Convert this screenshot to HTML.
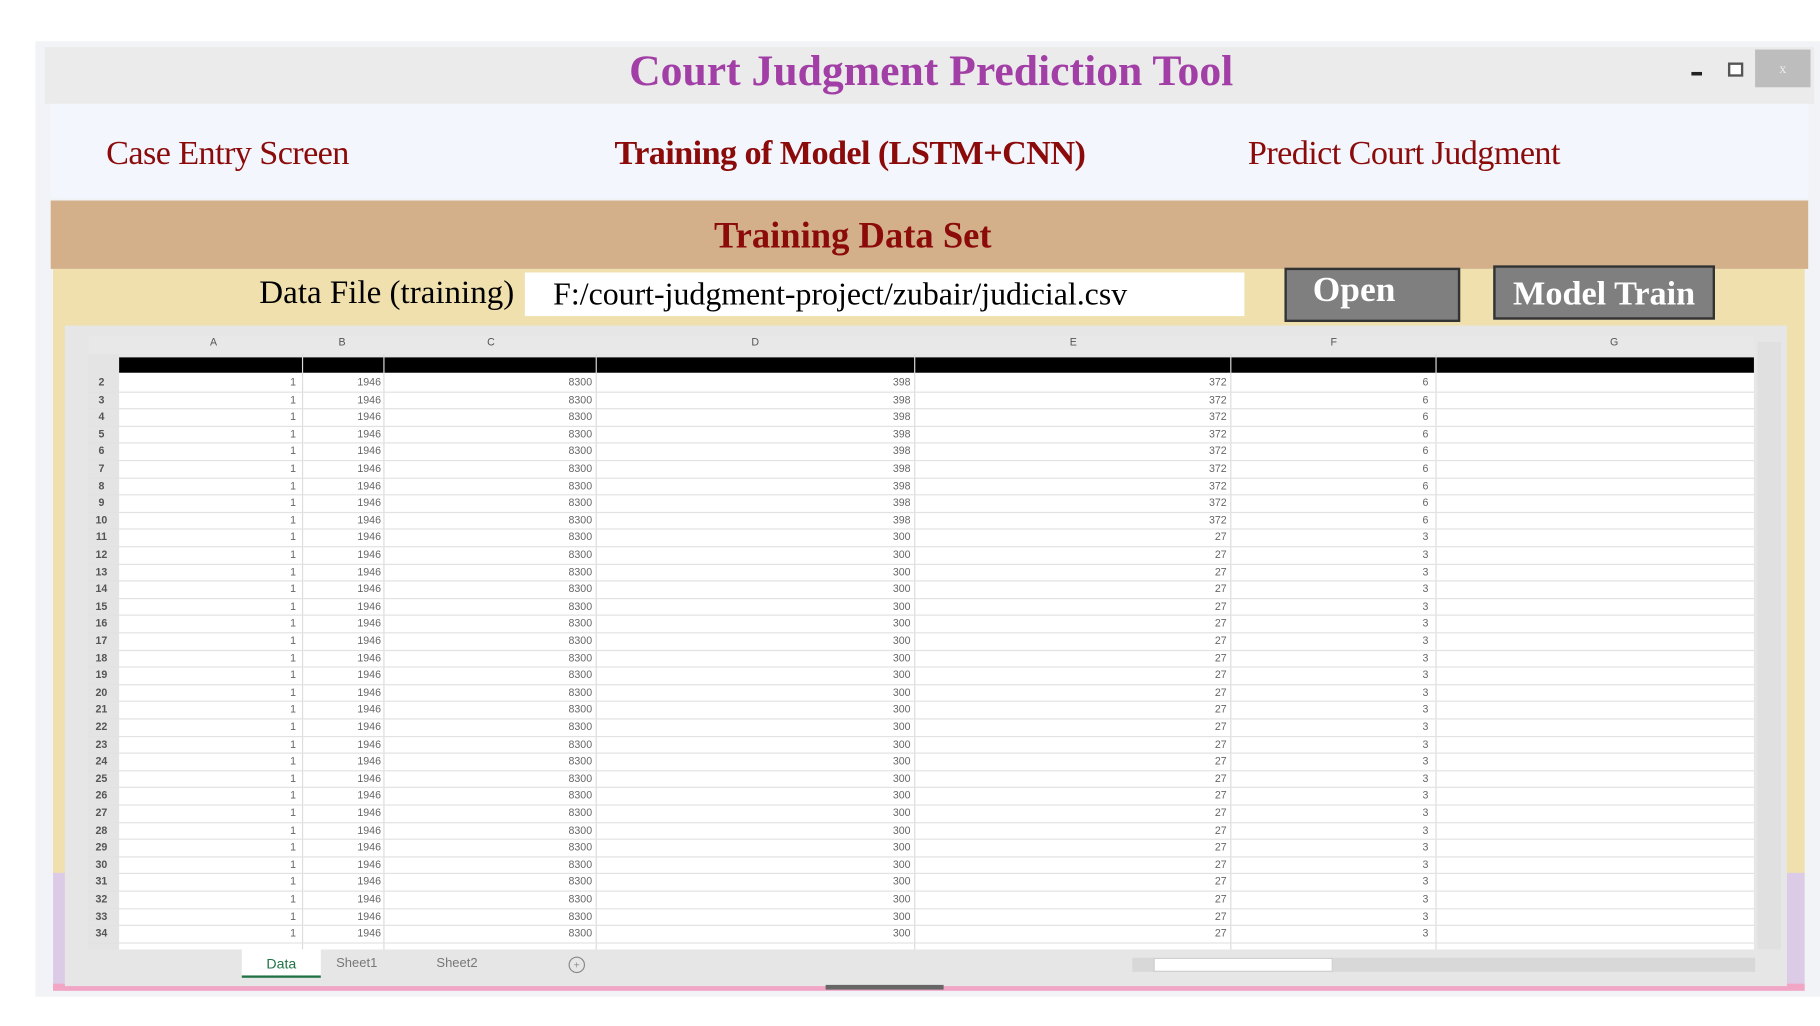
<!DOCTYPE html>
<html><head><meta charset="utf-8"><style>
html,body{margin:0;padding:0;background:#fff;width:1820px;height:1026px;overflow:hidden}
#s{position:absolute;left:0;top:0;width:1543px;height:870px;transform:scale(1.1795);transform-origin:0 0;font-family:"Liberation Serif",serif}
.a{position:absolute}
.nav{font-size:29px;color:#8b0a0a;top:114px;white-space:nowrap;letter-spacing:-0.5px}
.row{position:absolute;left:75px;width:1412px;height:14.6px;border-bottom:1px solid #e2e2e2;font-family:"Liberation Sans",sans-serif;font-size:9px;color:#666;line-height:14px}
.row span{position:absolute;text-align:right}
.rn{left:0;width:22px;text-align:center!important;color:#555;font-weight:bold}
.c1{left:26px;width:150px}.c2{left:181px;width:67px}.c3{left:250px;width:177px}.c4{left:430px;width:267px}.c5{left:700px;width:265px}.c6{left:968px;width:168px}
.vl{position:absolute;top:300px;height:505px;width:1px;background:#dcdcdc}
</style></head><body><div id="s">
<div class="a" style="left:30px;top:35px;width:1513px;height:810px;background:#f1f3f6"></div>
<div class="a" style="left:38px;top:40px;width:1500px;height:48px;background:#ebebeb"></div>
<div class="a" style="left:0;top:38px;width:1543px;text-align:center;font-size:37px;font-weight:bold;color:#a23fa6;padding-left:36px;box-sizing:border-box;line-height:46px">Court Judgment Prediction Tool</div>
<div class="a" style="left:1434px;top:61px;width:9px;height:3px;background:#222"></div>
<div class="a" style="left:1465px;top:53px;width:9px;height:8px;border:2px solid #555;background:#fff"></div>
<div class="a" style="left:1488px;top:42px;width:47px;height:32px;background:#bdbdbd;color:#eee;text-align:center;font-size:12px;line-height:32px">x</div>
<div class="a" style="left:43px;top:88px;width:1490px;height:80px;background:#f3f6fc"></div>
<div class="a nav" style="left:90px">Case Entry Screen</div>
<div class="a nav" style="left:521px;font-weight:bold">Training of Model (LSTM+CNN)</div>
<div class="a nav" style="left:1058px">Predict Court Judgment</div>
<div class="a" style="left:43px;top:170px;width:1490px;height:58px;background:#d3b08a"></div>
<div class="a" style="left:43px;top:182px;width:1360px;text-align:center;font-size:31px;font-weight:bold;color:#8b0a0a">Training Data Set</div>
<div class="a" style="left:45px;top:228px;width:1485px;height:515px;background:#efe0ae"></div>
<div class="a" style="left:45px;top:740px;width:1485px;height:100px;background:#dccbe6"></div>
<div class="a" style="left:45px;top:834px;width:1485px;height:6px;background:#f2a6c6"></div>
<div class="a" style="left:100px;top:233px;width:336px;text-align:right;font-size:28px;color:#000">Data File (training)</div>
<div class="a" style="left:445px;top:231px;width:610px;height:37px;background:#fff;font-size:27px;line-height:37px;padding-left:24px;box-sizing:border-box;white-space:nowrap">F:/court-judgment-project/zubair/judicial.csv</div>
<div class="a" style="left:1089px;top:227px;width:149px;height:46px;background:#7f7f7f;border:2px solid #333;box-sizing:border-box;color:#fff;font-weight:bold;font-size:30px;padding-left:22px;line-height:34px">Open</div>
<div class="a" style="left:1266px;top:225px;width:188px;height:46px;background:#7f7f7f;border:2px solid #333;box-sizing:border-box;color:#fff;font-weight:bold;font-size:29px;text-align:center;line-height:44px">Model Train</div>
<div class="a" style="left:55px;top:276px;width:1460px;height:560px;background:#e6e6e6"></div>
<div class="a" style="left:75px;top:285px;width:1412px;height:16px;background:#e8e8e8;font-family:'Liberation Sans',sans-serif;font-size:9px;color:#555"><span class="a" style="left:103px">A</span><span class="a" style="left:212px">B</span><span class="a" style="left:338px">C</span><span class="a" style="left:562px">D</span><span class="a" style="left:832px">E</span><span class="a" style="left:1053px">F</span><span class="a" style="left:1290px">G</span></div>
<div class="a" style="left:75px;top:300px;width:26px;height:505px;background:#e4e4e4"></div>
<div class="a" style="left:101px;top:316px;width:1386px;height:489px;background:#fff"></div>
<div class="a" style="left:101px;top:303px;width:1386px;height:13px;background:#000"></div>
<div class="vl" style="left:256px"></div><div class="vl" style="left:325px"></div><div class="vl" style="left:505px"></div><div class="vl" style="left:775px"></div><div class="vl" style="left:1043px"></div><div class="vl" style="left:1217px"></div>
<div class="a" style="left:1490px;top:290px;width:20px;height:515px;background:#e0e0e0"></div>
<div id="rows">
<div class="row" style="top:317px"><span class="rn">2</span><span class="c1">1</span><span class="c2">1946</span><span class="c3">8300</span><span class="c4">398</span><span class="c5">372</span><span class="c6">6</span></div>
<div class="row" style="top:331.6px"><span class="rn">3</span><span class="c1">1</span><span class="c2">1946</span><span class="c3">8300</span><span class="c4">398</span><span class="c5">372</span><span class="c6">6</span></div>
<div class="row" style="top:346.2px"><span class="rn">4</span><span class="c1">1</span><span class="c2">1946</span><span class="c3">8300</span><span class="c4">398</span><span class="c5">372</span><span class="c6">6</span></div>
<div class="row" style="top:360.8px"><span class="rn">5</span><span class="c1">1</span><span class="c2">1946</span><span class="c3">8300</span><span class="c4">398</span><span class="c5">372</span><span class="c6">6</span></div>
<div class="row" style="top:375.4px"><span class="rn">6</span><span class="c1">1</span><span class="c2">1946</span><span class="c3">8300</span><span class="c4">398</span><span class="c5">372</span><span class="c6">6</span></div>
<div class="row" style="top:390px"><span class="rn">7</span><span class="c1">1</span><span class="c2">1946</span><span class="c3">8300</span><span class="c4">398</span><span class="c5">372</span><span class="c6">6</span></div>
<div class="row" style="top:404.6px"><span class="rn">8</span><span class="c1">1</span><span class="c2">1946</span><span class="c3">8300</span><span class="c4">398</span><span class="c5">372</span><span class="c6">6</span></div>
<div class="row" style="top:419.2px"><span class="rn">9</span><span class="c1">1</span><span class="c2">1946</span><span class="c3">8300</span><span class="c4">398</span><span class="c5">372</span><span class="c6">6</span></div>
<div class="row" style="top:433.8px"><span class="rn">10</span><span class="c1">1</span><span class="c2">1946</span><span class="c3">8300</span><span class="c4">398</span><span class="c5">372</span><span class="c6">6</span></div>
<div class="row" style="top:448.4px"><span class="rn">11</span><span class="c1">1</span><span class="c2">1946</span><span class="c3">8300</span><span class="c4">300</span><span class="c5">27</span><span class="c6">3</span></div>
<div class="row" style="top:463px"><span class="rn">12</span><span class="c1">1</span><span class="c2">1946</span><span class="c3">8300</span><span class="c4">300</span><span class="c5">27</span><span class="c6">3</span></div>
<div class="row" style="top:477.6px"><span class="rn">13</span><span class="c1">1</span><span class="c2">1946</span><span class="c3">8300</span><span class="c4">300</span><span class="c5">27</span><span class="c6">3</span></div>
<div class="row" style="top:492.2px"><span class="rn">14</span><span class="c1">1</span><span class="c2">1946</span><span class="c3">8300</span><span class="c4">300</span><span class="c5">27</span><span class="c6">3</span></div>
<div class="row" style="top:506.8px"><span class="rn">15</span><span class="c1">1</span><span class="c2">1946</span><span class="c3">8300</span><span class="c4">300</span><span class="c5">27</span><span class="c6">3</span></div>
<div class="row" style="top:521.4px"><span class="rn">16</span><span class="c1">1</span><span class="c2">1946</span><span class="c3">8300</span><span class="c4">300</span><span class="c5">27</span><span class="c6">3</span></div>
<div class="row" style="top:536px"><span class="rn">17</span><span class="c1">1</span><span class="c2">1946</span><span class="c3">8300</span><span class="c4">300</span><span class="c5">27</span><span class="c6">3</span></div>
<div class="row" style="top:550.6px"><span class="rn">18</span><span class="c1">1</span><span class="c2">1946</span><span class="c3">8300</span><span class="c4">300</span><span class="c5">27</span><span class="c6">3</span></div>
<div class="row" style="top:565.2px"><span class="rn">19</span><span class="c1">1</span><span class="c2">1946</span><span class="c3">8300</span><span class="c4">300</span><span class="c5">27</span><span class="c6">3</span></div>
<div class="row" style="top:579.8px"><span class="rn">20</span><span class="c1">1</span><span class="c2">1946</span><span class="c3">8300</span><span class="c4">300</span><span class="c5">27</span><span class="c6">3</span></div>
<div class="row" style="top:594.4px"><span class="rn">21</span><span class="c1">1</span><span class="c2">1946</span><span class="c3">8300</span><span class="c4">300</span><span class="c5">27</span><span class="c6">3</span></div>
<div class="row" style="top:609px"><span class="rn">22</span><span class="c1">1</span><span class="c2">1946</span><span class="c3">8300</span><span class="c4">300</span><span class="c5">27</span><span class="c6">3</span></div>
<div class="row" style="top:623.6px"><span class="rn">23</span><span class="c1">1</span><span class="c2">1946</span><span class="c3">8300</span><span class="c4">300</span><span class="c5">27</span><span class="c6">3</span></div>
<div class="row" style="top:638.2px"><span class="rn">24</span><span class="c1">1</span><span class="c2">1946</span><span class="c3">8300</span><span class="c4">300</span><span class="c5">27</span><span class="c6">3</span></div>
<div class="row" style="top:652.8px"><span class="rn">25</span><span class="c1">1</span><span class="c2">1946</span><span class="c3">8300</span><span class="c4">300</span><span class="c5">27</span><span class="c6">3</span></div>
<div class="row" style="top:667.4px"><span class="rn">26</span><span class="c1">1</span><span class="c2">1946</span><span class="c3">8300</span><span class="c4">300</span><span class="c5">27</span><span class="c6">3</span></div>
<div class="row" style="top:682px"><span class="rn">27</span><span class="c1">1</span><span class="c2">1946</span><span class="c3">8300</span><span class="c4">300</span><span class="c5">27</span><span class="c6">3</span></div>
<div class="row" style="top:696.6px"><span class="rn">28</span><span class="c1">1</span><span class="c2">1946</span><span class="c3">8300</span><span class="c4">300</span><span class="c5">27</span><span class="c6">3</span></div>
<div class="row" style="top:711.2px"><span class="rn">29</span><span class="c1">1</span><span class="c2">1946</span><span class="c3">8300</span><span class="c4">300</span><span class="c5">27</span><span class="c6">3</span></div>
<div class="row" style="top:725.8px"><span class="rn">30</span><span class="c1">1</span><span class="c2">1946</span><span class="c3">8300</span><span class="c4">300</span><span class="c5">27</span><span class="c6">3</span></div>
<div class="row" style="top:740.4px"><span class="rn">31</span><span class="c1">1</span><span class="c2">1946</span><span class="c3">8300</span><span class="c4">300</span><span class="c5">27</span><span class="c6">3</span></div>
<div class="row" style="top:755px"><span class="rn">32</span><span class="c1">1</span><span class="c2">1946</span><span class="c3">8300</span><span class="c4">300</span><span class="c5">27</span><span class="c6">3</span></div>
<div class="row" style="top:769.6px"><span class="rn">33</span><span class="c1">1</span><span class="c2">1946</span><span class="c3">8300</span><span class="c4">300</span><span class="c5">27</span><span class="c6">3</span></div>
<div class="row" style="top:784.2px"><span class="rn">34</span><span class="c1">1</span><span class="c2">1946</span><span class="c3">8300</span><span class="c4">300</span><span class="c5">27</span><span class="c6">3</span></div>
</div>
<div class="a" style="left:75px;top:805px;width:1415px;height:25px;background:#e6e6e6;font-family:'Liberation Sans',sans-serif;font-size:11px;color:#777"></div>
<div class="a" style="left:205px;top:805px;width:67px;height:24px;background:#fff;border-bottom:2px solid #217346;box-sizing:border-box;text-align:center;font-family:'Liberation Sans',sans-serif;font-size:12px;color:#217346;line-height:24px">Data</div>
<div class="a" style="left:285px;top:811px;font-family:'Liberation Sans',sans-serif;font-size:11px;color:#777">Sheet1</div>
<div class="a" style="left:370px;top:811px;font-family:'Liberation Sans',sans-serif;font-size:11px;color:#777">Sheet2</div>
<div class="a" style="left:482px;top:811px;width:12px;height:12px;border:1px solid #888;border-radius:50%;font-size:9px;text-align:center;line-height:12px;color:#777">+</div>
<div class="a" style="left:960px;top:812px;width:528px;height:12px;background:#d8d8d8"></div>
<div class="a" style="left:978px;top:812px;width:152px;height:12px;background:#fff;border:1px solid #ccc;box-sizing:border-box"></div>
<div class="a" style="left:700px;top:835px;width:100px;height:4px;background:#666"></div>
</div></body></html>
